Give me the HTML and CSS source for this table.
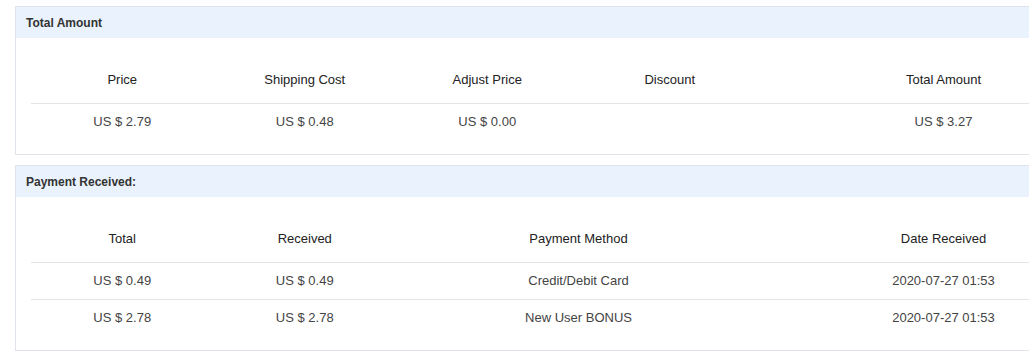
FILE: index.html
```html
<!DOCTYPE html>
<html>
<head>
<meta charset="utf-8">
<link rel="stylesheet" href="styles.css">
</head>
<body>
<div class="page">
  <section class="panel">
    <div class="panel-head">Total Amount</div>
    <div class="panel-body">
      <table class="grid">
        <colgroup>
          <col class="c1"><col class="c1"><col class="c1"><col class="c1"><col class="c2">
        </colgroup>
        <thead>
          <tr><th>Price</th><th>Shipping Cost</th><th>Adjust Price</th><th>Discount</th><th>Total Amount</th></tr>
        </thead>
        <tbody>
          <tr><td>US $ 2.79</td><td>US $ 0.48</td><td>US $ 0.00</td><td></td><td>US $ 3.27</td></tr>
        </tbody>
      </table>
    </div>
  </section>
  <section class="panel">
    <div class="panel-head">Payment Received:</div>
    <div class="panel-body">
      <table class="grid">
        <colgroup>
          <col class="c1"><col class="c1"><col class="c2"><col class="c2">
        </colgroup>
        <thead>
          <tr><th>Total</th><th>Received</th><th>Payment Method</th><th>Date Received</th></tr>
        </thead>
        <tbody>
          <tr><td>US $ 0.49</td><td>US $ 0.49</td><td>Credit/Debit Card</td><td>2020-07-27 01:53</td></tr>
          <tr><td>US $ 2.78</td><td>US $ 2.78</td><td>New User BONUS</td><td>2020-07-27 01:53</td></tr>
        </tbody>
      </table>
    </div>
  </section>
</div>
</body>
</html>
```
FILE: styles.css
```css
html, body {
  margin: 0;
  padding: 0;
  overflow: hidden;
  background: #ffffff;
}
body {
  font-family: "Liberation Sans", Arial, sans-serif;
  color: #444;
}
.page {
  padding: 6px 0 0 15px;
  width: 1126px;
}
.panel {
  border: 1px solid #dfe4ea;
  margin-bottom: 10px;
}
.panel-head {
  background: #e9f2fd;
  height: 31px;
  box-sizing: border-box;
  padding: 2px 10px 0;
  line-height: 29px;
  font-size: 12px;
  font-weight: bold;
  color: #333;
}
.panel-body {
  padding: 15px 15px 14px;
}
.grid {
  width: 100%;
  border-collapse: collapse;
  table-layout: fixed;
}
.c1 { width: 182.5px; }
.c2 { width: 365px; }
.grid th {
  font-weight: normal;
  font-size: 13px;
  line-height: 18px;
  padding: 18px 0 14px;
  color: #222;
  text-align: center;
}
.grid td {
  font-size: 13px;
  line-height: 18px;
  padding: 9px 0 9px;
  border-top: 1px solid #e4e4e4;
  color: #444;
  text-align: center;
}
```
